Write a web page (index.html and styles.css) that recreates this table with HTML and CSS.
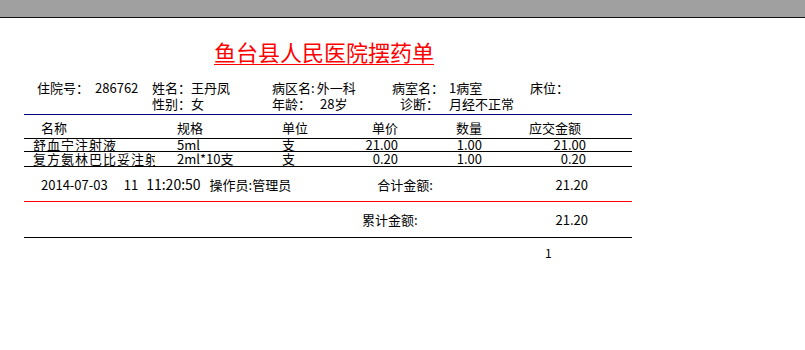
FILE: index.html
```html
<!DOCTYPE html>
<html lang="zh">
<head>
<meta charset="utf-8">
<title>鱼台县人民医院摆药单</title>
<link rel="stylesheet" href="styles.css">
</head>
<body>
<div class="topbar"></div>
<div class="page">
  <div class="title"><span class="title-text">鱼台县人民医院摆药单</span></div>

  <div class="info">
    <div class="c1"><span>住院号：</span><span class="v-no">286762</span></div>
    <div class="c2"><span>姓名：</span><span>王丹凤</span></div>
    <div class="c3"><span>病区名:</span><span class="v-ward">外一科</span></div>
    <div class="c4"><span>病室名：</span><span class="v-room">1病室</span></div>
    <div class="c5"><span>床位：</span></div>

    <div class="c1"></div>
    <div class="c2"><span>性别：</span><span>女</span></div>
    <div class="c3"><span>年龄：</span><span class="v-age">28岁</span></div>
    <div class="c4 diag"><span>诊断：</span><span class="v-diag">月经不正常</span></div>
    <div class="c5"></div>
  </div>

  <div class="table">
    <div class="row head">
      <div class="name">名称</div>
      <div class="spec">规格</div>
      <div class="unit">单位</div>
      <div class="num">单价</div>
      <div class="num">数量</div>
      <div class="num amt-head">应交金额</div>
    </div>
    <div class="row r1">
      <div class="name"><span class="clip">舒血宁注射液</span></div>
      <div class="spec">5ml</div>
      <div class="unit">支</div>
      <div class="num">21.00</div>
      <div class="num">1.00</div>
      <div class="num">21.00</div>
    </div>
    <div class="row r2">
      <div class="name"><span class="clip">复方氨林巴比妥注射液</span></div>
      <div class="spec">2ml*10支</div>
      <div class="unit">支</div>
      <div class="num">0.20</div>
      <div class="num">1.00</div>
      <div class="num">0.20</div>
    </div>
  </div>

  <div class="foot f1">
    <span class="date">2014-07-03</span>
    <span class="hh">11</span>
    <span class="time">11:20:50</span>
    <span class="op">操作员:管理员</span>
    <span class="sum-label">合计金额:</span>
    <span class="sum-val">21.20</span>
  </div>
  <div class="foot f2">
    <span class="acc-label">累计金额:</span>
    <span class="sum-val">21.20</span>
  </div>
  <div class="pageno">1</div>
</div>
</body>
</html>
```

FILE: styles.css
```css
html, body {
  margin: 0;
  padding: 0;
  background: #ffffff;
}

body {
  font-family: "Noto Sans CJK SC", "Liberation Sans", sans-serif;
  font-size: 13px;
  color: #000000;
}

.topbar {
  height: 17px;
  background: #a0a0a0;
  border-bottom: 1px solid #111111;
}

.page {
  margin-left: 24px;
  width: 608px;
}

.title {
  padding-top: 20px;
  padding-left: 190px;
  height: 26px;
  line-height: 26px;
}

.title-text {
  font-size: 22px;
  color: #ff0000;
  text-decoration: underline;
  text-underline-offset: 3px;
  text-decoration-thickness: 1px;
}

.info {
  margin-top: 16px;
  display: grid;
  grid-template-columns: 13px 115px 120px 120px 138px 1fr;
  grid-auto-rows: 16px;
  line-height: 16px;
  white-space: nowrap;
}

.info > .c1 { grid-column: 2; }
.info > .c2 { grid-column: 3; }
.info > .c3 { grid-column: 4; }
.info > .c4 { grid-column: 5; }
.info > .c5 { grid-column: 6; }

.v-no { margin-left: 6px; }
.v-ward { margin-left: 2px; }
.v-room { margin-left: 5px; }
.v-age { margin-left: 9px; }
.diag { padding-left: 8px; }
.v-diag { margin-left: 10px; }

.table {
  margin-top: 2px;
  border-top: 1px solid #000080;
}

.row {
  display: grid;
  grid-template-columns: 153px 105px 58px 58px 84px 104px 1fr;
  border-bottom: 1px solid #000000;
  white-space: nowrap;
}

.row .num { text-align: right; }

.head {
  height: 23px;
  line-height: 16px;
}
.head > div { padding-top: 5px; }
.head .name { padding-left: 17px; }
.head .amt-head { padding-right: 5px; }

.r1 {
  height: 12px;
  line-height: 12px;
}
.r2 {
  height: 14px;
  line-height: 14px;
}

.r1 .name, .r2 .name { padding-left: 9px; }

.clip {
  display: inline-block;
  width: 122px;
  overflow: hidden;
  vertical-align: top;
  letter-spacing: 1px;
}

.foot {
  display: flex;
  align-items: center;
  white-space: nowrap;
}

.f1 {
  height: 34px;
  border-bottom: 1px solid #ff0000;
}

.f2 {
  height: 35px;
  border-bottom: 1px solid #000000;
}

.date { margin-left: 17px; }
.hh { margin-left: 16px; }
.time { margin-left: 8px; font-size: 14px; }
.op { margin-left: 9px; }
.sum-label { margin-left: 86px; }
.f1 .sum-val { margin-left: auto; margin-right: 44px; }
.acc-label { margin-left: 338px; }
.f2 .sum-val { margin-left: auto; margin-right: 44px; }

.pageno {
  padding-left: 521px;
  margin-top: 7px;
  line-height: 16px;
  font-size: 12px;
}
```
